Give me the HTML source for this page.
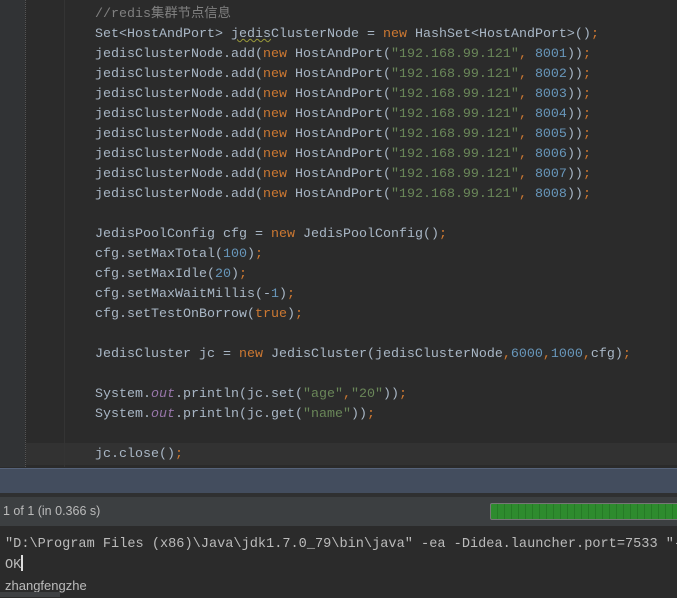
<!DOCTYPE html>
<html><head><meta charset="utf-8"><style>
*{margin:0;padding:0}
body{width:677px;height:597px;overflow:hidden;background:#2b2b2b;position:relative;font-family:"Liberation Mono","Noto Sans CJK SC",monospace}
.ed{position:absolute;left:0;top:0;width:677px;height:467px;background:#2b2b2b}
.gut{position:absolute;left:0;top:0;width:25px;height:467px;background:#313335}
.dl{position:absolute;left:25px;top:0;height:467px;border-left:1px dotted #555}
.il{position:absolute;left:64px;top:0;height:467px;border-left:1px solid #343434}
.cur{position:absolute;left:26px;top:443px;width:651px;height:22px;background:#323232}
.code{position:absolute;left:95px;top:5px;font-size:13.33px;line-height:20px;color:#a9b7c6;white-space:pre}
.k{color:#cc7832}.s{color:#6a8759}.n{color:#6897bb}.c{color:#808080}.o{color:#9876aa;font-style:italic}
.w{text-decoration:underline wavy #9a9a3a;text-decoration-thickness:1px}
.bar{position:absolute;left:0;top:468px;width:677px;height:25px;background:#434d5e;border-top:1px solid #56637a}
.sep{position:absolute;left:0;top:493px;width:677px;height:4px;background:#2f3031}
.st{position:absolute;left:0;top:497px;width:677px;height:29px;background:#3c3f41;font-family:"Liberation Sans",sans-serif;font-size:12.5px;color:#bbb;line-height:29px;padding-left:3px;box-sizing:border-box}
.pb{position:absolute;left:490px;top:503px;width:200px;height:15px;border:1px solid #777;border-radius:2px;background:repeating-linear-gradient(90deg,#2e8b2e 0 6px,#267a26 6px 7px)}
.con{position:absolute;left:5px;top:535px;font-size:13.6px;line-height:20px;color:#bbb;white-space:pre}
.caret{display:inline-block;width:2px;height:16px;background:#ddd;vertical-align:-3px}
.sb{position:absolute;left:0;top:592px;width:60px;height:5px;background:#3e4042}
</style></head><body>
<div class="ed"><div class="gut"></div><div class="cur"></div><div class="dl"></div><div class="il"></div>
<div class="code"><span class="c">//redis集群节点信息</span>
Set&lt;HostAndPort&gt; <span class="w">jedis</span>ClusterNode = <span class="k">new</span> HashSet&lt;HostAndPort&gt;()<span class="k">;</span>
jedisClusterNode.add(<span class="k">new</span> HostAndPort(<span class="s">"192.168.99.121"</span><span class="k">,</span> <span class="n">8001</span>))<span class="k">;</span>
jedisClusterNode.add(<span class="k">new</span> HostAndPort(<span class="s">"192.168.99.121"</span><span class="k">,</span> <span class="n">8002</span>))<span class="k">;</span>
jedisClusterNode.add(<span class="k">new</span> HostAndPort(<span class="s">"192.168.99.121"</span><span class="k">,</span> <span class="n">8003</span>))<span class="k">;</span>
jedisClusterNode.add(<span class="k">new</span> HostAndPort(<span class="s">"192.168.99.121"</span><span class="k">,</span> <span class="n">8004</span>))<span class="k">;</span>
jedisClusterNode.add(<span class="k">new</span> HostAndPort(<span class="s">"192.168.99.121"</span><span class="k">,</span> <span class="n">8005</span>))<span class="k">;</span>
jedisClusterNode.add(<span class="k">new</span> HostAndPort(<span class="s">"192.168.99.121"</span><span class="k">,</span> <span class="n">8006</span>))<span class="k">;</span>
jedisClusterNode.add(<span class="k">new</span> HostAndPort(<span class="s">"192.168.99.121"</span><span class="k">,</span> <span class="n">8007</span>))<span class="k">;</span>
jedisClusterNode.add(<span class="k">new</span> HostAndPort(<span class="s">"192.168.99.121"</span><span class="k">,</span> <span class="n">8008</span>))<span class="k">;</span>

JedisPoolConfig cfg = <span class="k">new</span> JedisPoolConfig()<span class="k">;</span>
cfg.setMaxTotal(<span class="n">100</span>)<span class="k">;</span>
cfg.setMaxIdle(<span class="n">20</span>)<span class="k">;</span>
cfg.setMaxWaitMillis(-<span class="n">1</span>)<span class="k">;</span>
cfg.setTestOnBorrow(<span class="k">true</span>)<span class="k">;</span>

JedisCluster jc = <span class="k">new</span> JedisCluster(jedisClusterNode<span class="k">,</span><span class="n">6000</span><span class="k">,</span><span class="n">1000</span><span class="k">,</span>cfg)<span class="k">;</span>

System.<span class="o">out</span>.println(jc.set(<span class="s">"age"</span><span class="k">,</span><span class="s">"20"</span>))<span class="k">;</span>
System.<span class="o">out</span>.println(jc.get(<span class="s">"name"</span>))<span class="k">;</span>

jc.close()<span class="k">;</span></div></div>
<div class="bar"></div><div class="sep"></div>
<div class="st">1 of 1 (in 0.366 s)</div>
<div class="pb"></div>
<div class="con">"D:\Program Files (x86)\Java\jdk1.7.0_79\bin\java" -ea -Didea.launcher.port=7533 "-D
OK<span class="caret"></span>
<span style="font-family:'Liberation Sans',sans-serif;font-size:13px">zhangfengzhe</span></div>
<div class="sb"></div>
</body></html>
